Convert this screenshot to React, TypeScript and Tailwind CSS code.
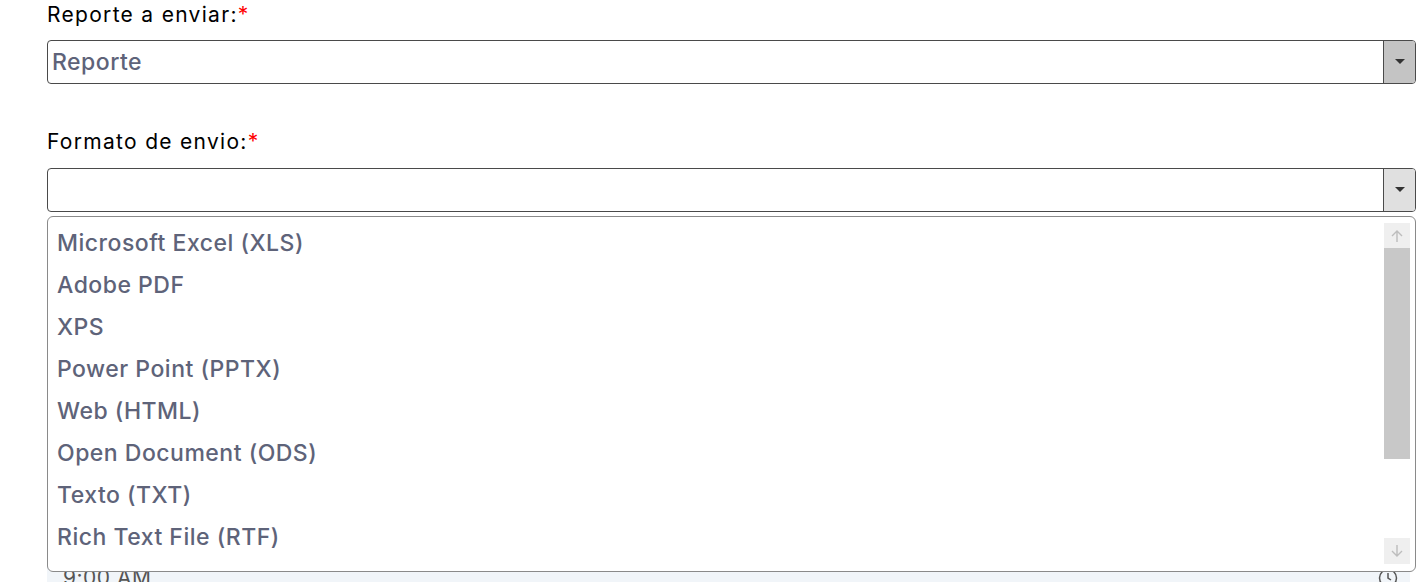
import React from "react";

const formatos = [
  "Microsoft Excel (XLS)",
  "Adobe PDF",
  "XPS",
  "Power Point (PPTX)",
  "Web (HTML)",
  "Open Document (ODS)",
  "Texto (TXT)",
  "Rich Text File (RTF)",
];

const Caret: React.FC = () => (
  <svg width="10" height="6" viewBox="0 0 10 6">
    <path d="M0 0 L10 0 L5 5 Z" fill="#333333" />
  </svg>
);

const Label: React.FC<{ text: string }> = ({ text }) => (
  <label className="block text-[21px] leading-[24px] tracking-[1.3px] text-black">
    {text}
    <span className="text-[#ff0000]">*</span>
  </label>
);

const App: React.FC = () => {
  return (
    <div
      className="min-h-screen bg-white pl-[47px] pr-[6px] pt-[3px]"
      style={{ fontFamily: "Inter, 'Noto Sans', sans-serif" }}
    >
      <Label text="Reporte a enviar:" />
      <div className="mt-[13px] flex h-[44px] rounded-[4px] border border-[#4a4a4a] overflow-hidden">
        <div className="flex flex-1 items-center pl-[4px] pt-[1px] text-[23px] font-medium tracking-[0.5px] text-[#5e6379]">
          Reporte
        </div>
        <div className="flex w-[32px] items-center justify-center border-l border-[#4a4a4a] bg-[#c4c4c4]">
          <Caret />
        </div>
      </div>

      <div className="mt-[46px]">
        <Label text="Formato de envio:" />
      </div>

      <div className="relative mt-[14px]">
        <div className="flex h-[44px] rounded-[4px] border border-[#4a4a4a] overflow-hidden">
          <div className="flex-1" />
          <div className="flex w-[32px] items-center justify-center border-l border-[#4a4a4a] bg-[#e0e0e0]">
            <Caret />
          </div>
        </div>

        <div className="absolute left-0 right-0 top-[48px] z-10 flex h-[356px] rounded-[6px] border border-[#8a8a8a] bg-white">
          <ul className="flex-1 pt-[5px]">
            {formatos.map((f) => (
              <li
                key={f}
                className="flex h-[42px] items-center pl-[9px] text-[23px] font-medium tracking-[0.5px] text-[#5e6379]"
              >
                {f}
              </li>
            ))}
          </ul>
          <div className="mr-[5px] mt-[6px] flex w-[26px] flex-col">
            <div className="flex h-[25px] items-center justify-center bg-[#efefef]">
              <svg width="14" height="14" viewBox="0 0 14 14" fill="none" stroke="#bdbdbd" strokeWidth="1.4">
                <path d="M7 13 V2 M2 7 L7 2 L12 7" />
              </svg>
            </div>
            <div className="h-[211px] bg-[#c8c8c8]" />
            <div className="flex-1" />
            <div className="mb-[7px] flex h-[26px] items-center justify-center bg-[#efefef]">
              <svg width="14" height="14" viewBox="0 0 14 14" fill="none" stroke="#bdbdbd" strokeWidth="1.4">
                <path d="M7 1 V12 M2 7 L7 12 L12 7" />
              </svg>
            </div>
          </div>
        </div>
      </div>

      <div className="mt-[344px] mr-[6px] flex h-[44px] items-center justify-between bg-[#f1f5f9] pl-[16px] pr-[12px]">
        <span className="text-[21px] tracking-[0.5px] text-[#555555]">9:00 AM</span>
        <svg width="20" height="20" viewBox="0 0 20 20" fill="none" stroke="#555555" strokeWidth="1.5">
          <circle cx="10" cy="10" r="8.5" />
          <path d="M10 5 V10 L13 12" />
        </svg>
      </div>
    </div>
  );
};

export default App;
